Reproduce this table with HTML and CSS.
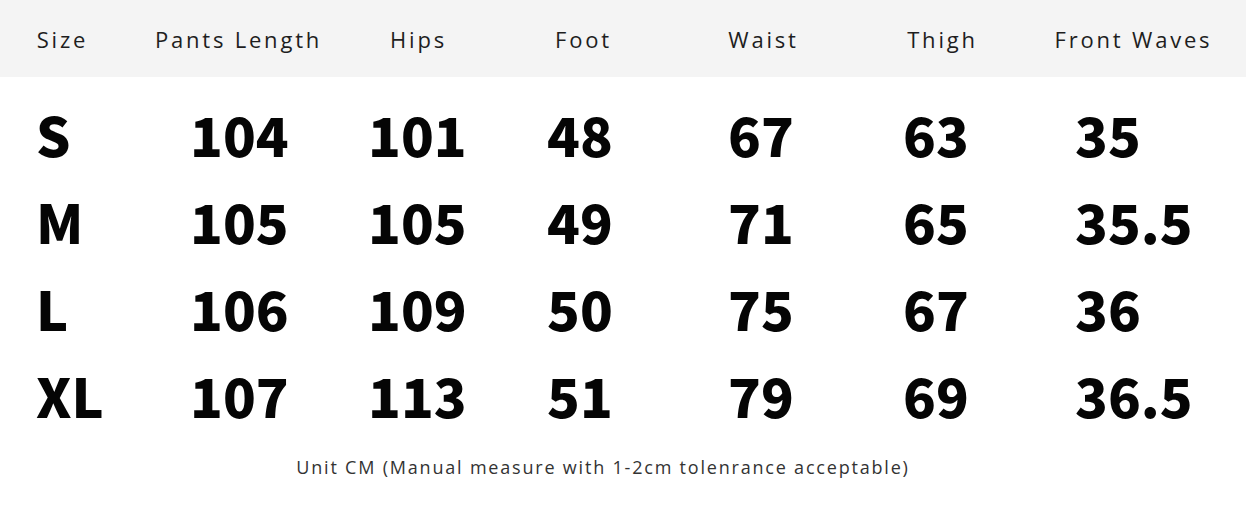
FILE: index.html
```html
<!DOCTYPE html>
<html lang="en">
<head>
<meta charset="utf-8">
<title>Size Chart</title>
<link rel="stylesheet" href="styles.css">
</head>
<body>
<div class="chart">
  <div class="head">
    <div class="h">Size</div>
    <div class="h">Pants Length</div>
    <div class="h">Hips</div>
    <div class="h">Foot</div>
    <div class="h">Waist</div>
    <div class="h">Thigh</div>
    <div class="h">Front Waves</div>
  </div>
  <div class="rows">
    <div class="row"><span>S</span><span>104</span><span>101</span><span>48</span><span>67</span><span>63</span><span>35</span></div>
    <div class="row"><span>M</span><span>105</span><span>105</span><span>49</span><span>71</span><span>65</span><span>35.5</span></div>
    <div class="row"><span>L</span><span>106</span><span>109</span><span>50</span><span>75</span><span>67</span><span>36</span></div>
    <div class="row"><span>XL</span><span>107</span><span>113</span><span>51</span><span>79</span><span>69</span><span>36.5</span></div>
  </div>
  <p class="note">Unit CM (Manual measure with 1-2cm tolenrance acceptable)</p>
</div>
</body>
</html>
```

FILE: styles.css
```css
html, body {
  margin: 0;
  padding: 0;
  background: #ffffff;
}
.chart {
  width: 1246px;
  height: 505px;
  overflow: hidden;
}
.head {
  display: grid;
  grid-template-columns: 122px 230px 130px 200px 160px 198px 184px;
  height: 77px;
  align-items: center;
  background: #f4f4f4;
}
.h {
  text-align: center;
  font-family: "Open Sans", "Liberation Sans", sans-serif;
  font-size: 22px;
  letter-spacing: 2.8px;
  color: #1e1e1e;
  padding-left: 3px;
}
.rows {
  padding-top: 13px;
}
.row {
  display: grid;
  grid-template-columns: 154px 178px 179px 181px 175px 172px 1fr;
  padding-left: 36px;
  height: 87px;
  line-height: 87px;
  font-family: "Noto Sans CJK SC", "Noto Sans", sans-serif;
  font-weight: 900;
  font-size: 54px;
  color: #050505;
}
.note {
  margin: 0;
  padding-top: 17px;
  text-align: center;
  font-family: "Open Sans", "Liberation Sans", sans-serif;
  font-size: 18px;
  letter-spacing: 1.8px;
  color: #333333;
  padding-right: 40px;
}
```
